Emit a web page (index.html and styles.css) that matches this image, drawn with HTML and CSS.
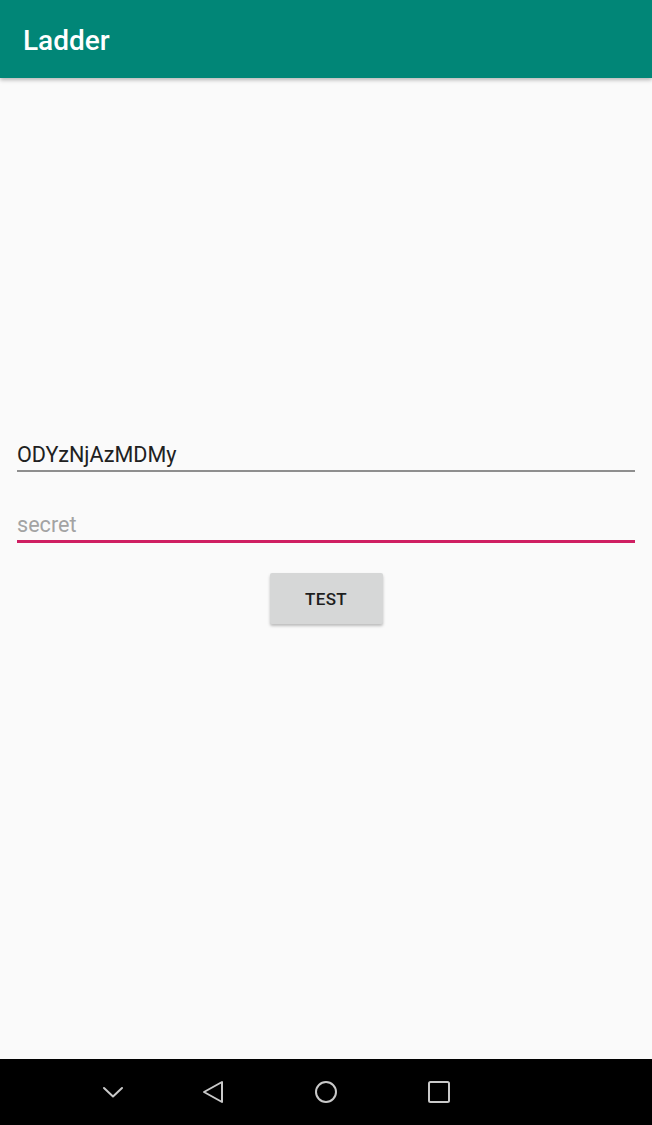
FILE: index.html
```html
<!DOCTYPE html>
<html lang="en">
<head>
<meta charset="utf-8">
<title>Ladder</title>
<link rel="stylesheet" href="styles.css">
</head>
<body>
<div class="screen">
  <header class="appbar">
    <h1 class="title">Ladder</h1>
  </header>
  <main class="content">
    <div class="field field-filled">ODYzNjAzMDMy</div>
    <div class="field field-focused"><span class="hint">secret</span></div>
    <div class="actions">
      <button class="btn" type="button">TEST</button>
    </div>
  </main>
  <nav class="navbar">
    <span class="nav-icon nav-hide">
      <svg width="40" height="40" viewBox="0 0 40 40"><polyline points="11,16 20,24.5 29,16" fill="none" stroke="#c9c9c9" stroke-width="2" stroke-linecap="round" stroke-linejoin="round"/></svg>
    </span>
    <span class="nav-icon nav-back">
      <svg width="40" height="40" viewBox="0 0 40 40"><polygon points="29,10 29,30 11,20" fill="none" stroke="#c9c9c9" stroke-width="2" stroke-linejoin="round"/></svg>
    </span>
    <span class="nav-icon nav-home">
      <svg width="40" height="40" viewBox="0 0 40 40"><circle cx="20" cy="20" r="10" fill="none" stroke="#c9c9c9" stroke-width="2"/></svg>
    </span>
    <span class="nav-icon nav-recent">
      <svg width="40" height="40" viewBox="0 0 40 40"><rect x="10" y="10" width="20" height="20" rx="1.5" fill="none" stroke="#c9c9c9" stroke-width="2"/></svg>
    </span>
  </nav>
</div>
</body>
</html>
```
FILE: styles.css
```css
html, body {
  margin: 0;
  padding: 0;
  background: #fafafa;
}
.screen {
  width: 652px;
  height: 1125px;
  display: flex;
  flex-direction: column;
  font-family: Roboto, "Liberation Sans", sans-serif;
  background: #fafafa;
  overflow: hidden;
}
.appbar {
  height: 78px;
  flex: none;
  background: #018677;
  display: flex;
  align-items: center;
  padding: 3px 0 0 23px;
  box-sizing: border-box;
  box-shadow: 0 2px 4px rgba(0, 0, 0, 0.28);
  position: relative;
  z-index: 1;
}
.title {
  margin: 0;
  font-size: 28px;
  font-weight: 500;
  color: #ffffff;
  line-height: 1;
}
.content {
  flex: 1;
  padding: 362px 17px 0;
  display: flex;
  flex-direction: column;
}
.field {
  font-size: 21.6px;
  line-height: 30px;
  height: 30px;
  color: #212121;
  padding-left: 0;
}
.field-filled {
  border-bottom: 2px solid #8e8e8e;
}
.field-focused {
  margin-top: 38px;
  border-bottom: 3px solid #cf1f62;
}
.hint {
  color: #a3a3a3;
}
.actions {
  display: flex;
  justify-content: center;
  margin-top: 30px;
}
.btn {
  width: 113px;
  height: 51px;
  border: none;
  border-radius: 2px;
  background: #d6d7d7;
  box-shadow: 0 2px 3px rgba(0, 0, 0, 0.25);
  font-family: Roboto, "Liberation Sans", sans-serif;
  font-size: 17px;
  font-weight: 500;
  letter-spacing: 0.4px;
  color: #1e1e1e;
  padding: 0;
}
.navbar {
  height: 66px;
  flex: none;
  background: #000000;
  display: flex;
  align-items: center;
  padding-left: 93px;
}
.nav-icon {
  width: 40px;
  height: 40px;
  display: block;
}
.nav-icon svg {
  display: block;
}
.nav-back {
  margin-left: 60px;
}
.nav-home,
.nav-recent {
  margin-left: 73px;
}
```
